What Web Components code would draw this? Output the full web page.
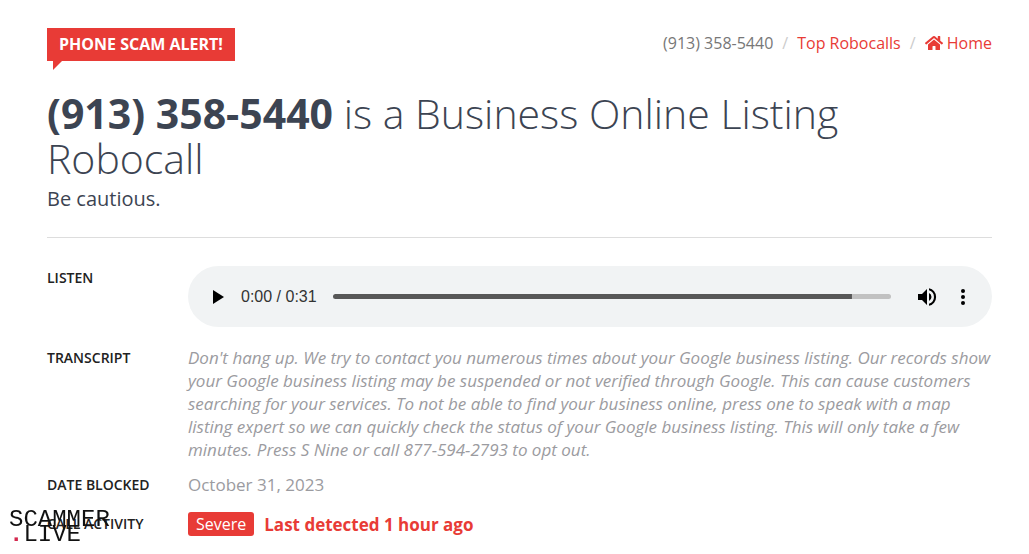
<!DOCTYPE html>
<html lang="en">
<head>
<meta charset="utf-8">
<title>(913) 358-5440 - Business Online Listing Robocall</title>
<style>
  html { background: #fff; }
  body { margin: 0; font: 16px/24px "Open Sans", sans-serif; color: #9b9ba0; --accent: #e83b36; --ink: #3c4452; }
</style>
</head>
<body>
<robocall-page></robocall-page>
<script>
const define = (name, html, Base = HTMLElement) => {
  const template = document.createElement('template');
  template.innerHTML = html;
  customElements.define(name, class extends Base {
    constructor() {
      super();
      this.attachShadow({ mode: 'open' }).append(template.content.cloneNode(true));
    }
  });
};

define('alert-flag', `
<style>
  :host { display: block; position: relative; box-sizing: border-box; height: 33px; padding: 0 12px; background: var(--accent); color: #fff; font-weight: 700; font-size: 16px; line-height: 33px; white-space: nowrap; }
  :host::after { content: ""; position: absolute; left: 6px; top: 100%; border-top: 9px solid var(--accent); border-right: 9px solid transparent; }
</style><slot></slot>`);

define('crumb-trail', `
<style>
  :host { display: block; color: #777; line-height: 24px; }
  ol { display: flex; list-style: none; margin: 0; padding: 0; white-space: nowrap; }
  li + li::before { content: "/"; color: #ccc; padding: 0 9px; }
  a { color: var(--accent); text-decoration: none; }
  svg { width: 18px; height: 16px; vertical-align: -2px; fill: currentColor; }
</style>
<nav aria-label="Breadcrumb"><ol>
  <li>(913) 358-5440</li>
  <li><a href="#top">Top Robocalls</a></li>
  <li><a href="#home"><svg viewBox="0 0 576 512" aria-hidden="true"><path d="M280 148 96 300v164a16 16 0 0 0 16 16h112a16 16 0 0 0 16-16v-96a16 16 0 0 1 16-16h64a16 16 0 0 1 16 16v96a16 16 0 0 0 16 16h112a16 16 0 0 0 16-16V300L296 148a12 12 0 0 0-16 0zM572 251l-84-69V44a12 12 0 0 0-12-12h-56a12 12 0 0 0-12 12v72l-90-74a48 48 0 0 0-61 0L4 251a12 12 0 0 0-1 17l25 31a12 12 0 0 0 17 2L280 107a12 12 0 0 1 16 0l235 194a12 12 0 0 0 17-2l25-31a12 12 0 0 0-1-17z"/></svg> Home</a></li>
</ol></nav>`);

define('call-heading', `
<style>
  :host { display: block; color: var(--ink); padding-bottom: 25px; border-bottom: 1px solid #ddd; }
  h1 { margin: 0; font-size: 41px; line-height: 45px; font-weight: 300; }
  p { margin: 5px 0 0; font-size: 20px; line-height: 26px; }
</style>
<h1><slot name="title"></slot></h1><p><slot></slot></p>`);

define('detail-row', `
<style>
  :host { display: grid; grid-template-columns: 141px minmax(0, 1fr); }
  dt { color: #222; font-weight: 600; font-size: 14px; line-height: 23px; white-space: nowrap; }
  dd { margin: 0; font-size: 17px; line-height: 23px; }
</style>
<dt><slot name="label"></slot></dt><dd><slot></slot></dd>`);

define('audio-bar', `
<style>
  :host { display: flex; align-items: center; box-sizing: border-box; height: 61px; padding: 0 17px 0 18px; border-radius: 31px; background: #f1f3f4; color: #333; font: 16px/24px "Liberation Sans", sans-serif; }
  button { flex: none; width: 24px; height: 24px; padding: 0; border: 0; background: none; }
  svg { display: block; width: 24px; height: 24px; fill: #000; }
  time { white-space: nowrap; margin-left: 11px; }
  input { appearance: none; flex: 1; min-width: 0; height: 5px; margin: 0 24px 0 16px; border-radius: 3px; background: #c1c1c1 linear-gradient(#575757, #575757) no-repeat 0 0 / 93% 100%; }
  input::-webkit-slider-thumb { appearance: none; width: 0; height: 0; }
  .more { margin-left: 12px; }
</style>
<button aria-label="Play"><svg viewBox="0 0 24 24"><path d="M7 5v14l11-7z"/></svg></button>
<time>0:00 / 0:31</time>
<input type="range" min="0" max="31" value="0" aria-label="Playback position">
<button aria-label="Mute"><svg viewBox="0 0 24 24"><path d="M3 9v6h4l5 5V4L7 9H3zm13.500 3A4.500 4.500 0 0 0 14 8v8a4.500 4.500 0 0 0 2.500-4zM14 3.200v2.100a7 7 0 0 1 0 13.400v2.100a9 9 0 0 0 0-17.600z"/></svg></button>
<button class="more" aria-label="More options"><svg viewBox="0 0 24 24"><circle cx="12" cy="6" r="2"/><circle cx="12" cy="12" r="2"/><circle cx="12" cy="18" r="2"/></svg></button>`);

define('severity-status', `
<style>
  :host { display: flex; align-items: center; gap: 10px; color: var(--accent); }
  .level { background: var(--accent); color: #fff; border-radius: 3px; padding: 0 8px; font-size: 16px; line-height: 24px; }
  strong { font-weight: 700; }
</style><span class="level"><slot name="level"></slot></span><strong><slot></slot></strong>`);

define('site-mark', `
<style>
  :host { display: block; position: fixed; left: 9px; bottom: 12px; color: #111; font: 24px/15px "Liberation Mono", monospace; pointer-events: none; }
  div { white-space: nowrap; }
  b { color: #d4294f; font-weight: 700; }
</style><div>SCAMMER</div><div><b>.</b>LIVE</div>`);

define('robocall-page', `
<style>
  :host { display: block; padding: 28px 37px 18px 47px; }
  header { display: flex; justify-content: space-between; align-items: flex-start; margin-bottom: 30px; }
  crumb-trail { padding-top: 3px; }
  strong { font-weight: 700; }
  dl { margin: 28px 0 0; display: flex; flex-direction: column; }
  .text { margin-top: 19px; }
  .date { margin-top: 12px; }
  .activity { margin-top: 16px; }
  em { display: block; }
</style>
<main>
<header><alert-flag>PHONE SCAM ALERT!</alert-flag><crumb-trail></crumb-trail></header>
<call-heading><span slot="title"><strong>(913) 358-5440</strong> is a Business Online Listing Robocall</span>Be cautious.</call-heading>
<dl>
  <detail-row><span slot="label">LISTEN</span><audio-bar></audio-bar></detail-row>
  <detail-row class="text"><span slot="label">TRANSCRIPT</span><em>Don't hang up. We try to contact you numerous times about your Google business listing. Our records show your Google business listing may be suspended or not verified through Google. This can cause customers searching for your services. To not be able to find your business online, press one to speak with a map listing expert so we can quickly check the status of your Google business listing. This will only take a few minutes. Press S Nine or call 877-594-2793 to opt out.</em></detail-row>
  <detail-row class="date"><span slot="label">DATE BLOCKED</span>October 31, 2023</detail-row>
  <detail-row class="activity"><span slot="label">CALL ACTIVITY</span><severity-status><span slot="level">Severe</span>Last detected 1 hour ago</severity-status></detail-row>
</dl>
</main>
<site-mark></site-mark>`);
</script>
</body>
</html>
